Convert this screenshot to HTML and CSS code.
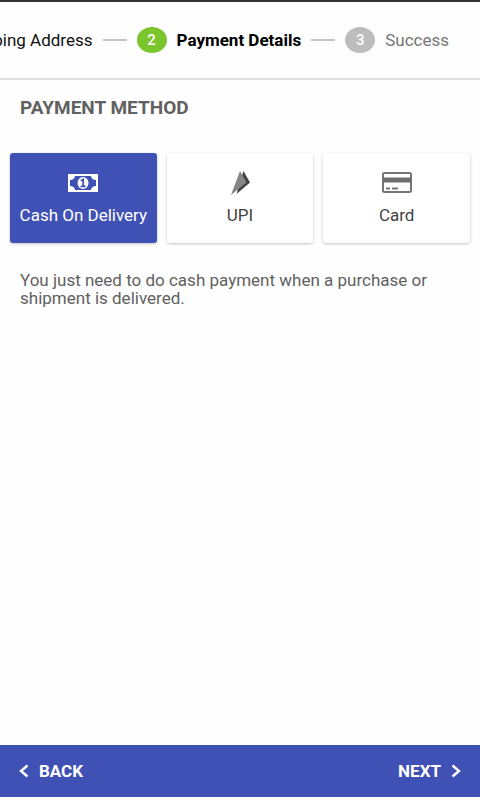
FILE: index.html
```html
<!DOCTYPE html>
<html lang="en">
<head>
<meta charset="utf-8">
<meta name="viewport" content="width=device-width, initial-scale=1">
<title>Payment Details</title>
<link rel="stylesheet" href="styles.css">
</head>
<body>
<header class="stepper">
  <ol class="steps">
    <li class="step">Shipping Address</li>
    <li class="step current" aria-current="step"><span class="badge">2</span>Payment Details</li>
    <li class="step upcoming"><span class="badge">3</span>Success</li>
  </ol>
</header>
<main class="content">
  <h1 class="title">PAYMENT METHOD</h1>
  <div class="methods">
    <button class="method selected" type="button" aria-pressed="true">
      <svg class="icon" viewBox="0 0 32 24" aria-hidden="true">
        <path fill="#fff" d="M1 3h30v18H1z"/>
        <path fill="#3f51b5" d="M8 5h16c0 2 2 4 5 4v6c-3 0-5 2-5 4H8c0-2-2-4-5-4V9c3 0 5-2 5-4z"/>
        <ellipse cx="16" cy="12" rx="5.500" ry="6" fill="#fff"/>
        <path fill="none" stroke="#3f51b5" stroke-width="1.8" d="M13.800 9.800l2.400-1.300v6.700M13.600 15.300h5"/>
      </svg>
      Cash On Delivery
    </button>
    <button class="method" type="button" aria-pressed="false">
      <svg class="icon" viewBox="0 0 32 24" aria-hidden="true">
        <path fill="#424242" d="M19.500 0L26 11.500 12.500 23z"/>
        <path fill="#858585" d="M16 0L22.500 11.500 7 24z"/>
      </svg>
      UPI
    </button>
    <button class="method" type="button" aria-pressed="false">
      <svg class="icon" viewBox="0 0 32 24" aria-hidden="true">
        <rect x="2" y="2" width="28" height="19" rx="1.500" fill="none" stroke="#757575" stroke-width="2"/>
        <path fill="#6c6c6c" d="M2 6.500h28v5H2z"/>
        <path stroke="#757575" stroke-width="1.800" d="M5 17.500h4M11 17.500h6"/>
      </svg>
      Card
    </button>
  </div>
  <p class="note">You just need to do cash payment when a purchase or shipment is delivered.</p>
</main>
<footer class="actions">
  <button class="action" type="button">
    <svg class="chevron" viewBox="0 0 10 14" aria-hidden="true"><path d="M8.500 1.500L2 7l6.500 5.500"/></svg>
    BACK
  </button>
  <button class="action" type="button">
    NEXT
    <svg class="chevron" viewBox="0 0 10 14" aria-hidden="true"><path d="M1.500 1.500L8 7l-6.500 5.500"/></svg>
  </button>
</footer>
</body>
</html>
```

FILE: styles.css
```css
* {
  box-sizing: border-box;
}

body {
  display: flex;
  flex-direction: column;
  min-height: 100vh;
  margin: 0;
  padding-bottom: 3px;
  background: #fefefe;
  color: #616161;
  font-family: Roboto, "Liberation Sans", sans-serif;
  font-size: 17px;
}

button {
  border: 0;
  font: inherit;
  cursor: pointer;
}

.stepper {
  overflow: hidden;
  padding: 24px 31px 24px 0;
  border-top: 2px solid #353338;
  border-bottom: 2px solid #dedede;
}

.steps {
  display: flex;
  justify-content: flex-end;
  gap: 10px;
  margin: 0;
  padding: 0;
  list-style: none;
}

.step {
  display: flex;
  flex: none;
  align-items: center;
  gap: 10px;
  height: 28px;
  color: #111;
}

.step:not(:last-child)::after {
  content: "";
  width: 24px;
  height: 2px;
  background: #c6c6c6;
}

.badge {
  width: 30px;
  height: 26px;
  border-radius: 50%;
  background: #bdbdbd;
  color: #fff;
  font-size: 15px;
  line-height: 26px;
  font-weight: 500;
  text-align: center;
}

.current {
  color: #000;
  font-weight: 700;
}

.current .badge {
  background: #7bc62d;
}

.upcoming {
  color: #757575;
}

.content {
  flex: 1;
  padding: 16px 10px;
}

.title {
  margin: 0 10px 33px;
  font-size: 19px;
  font-weight: 700;
  line-height: 24px;
}

.methods {
  display: grid;
  grid-template-columns: repeat(3, 1fr);
  gap: 10px;
}

.method {
  display: flex;
  flex-direction: column;
  align-items: center;
  gap: 10px;
  height: 90px;
  padding: 18px 0 0;
  border-radius: 3px;
  background: #fff;
  box-shadow: 0 1px 3px rgba(0, 0, 0, 0.24);
  color: #424242;
  line-height: 20px;
  white-space: nowrap;
}

.selected {
  background: #3f51b5;
  color: #fff;
}

.icon {
  width: 32px;
  height: 24px;
}

.note {
  margin: 28px 10px 0;
  line-height: 18px;
}

.actions {
  display: flex;
  justify-content: space-between;
  padding: 0 19px;
  background: #3f51b5;
}

.action {
  display: flex;
  align-items: center;
  gap: 10px;
  height: 52px;
  padding: 0;
  background: none;
  color: #fff;
  font-weight: 700;
}

.chevron {
  width: 10px;
  height: 14px;
  fill: none;
  stroke: currentColor;
  stroke-width: 2.4;
}
```
